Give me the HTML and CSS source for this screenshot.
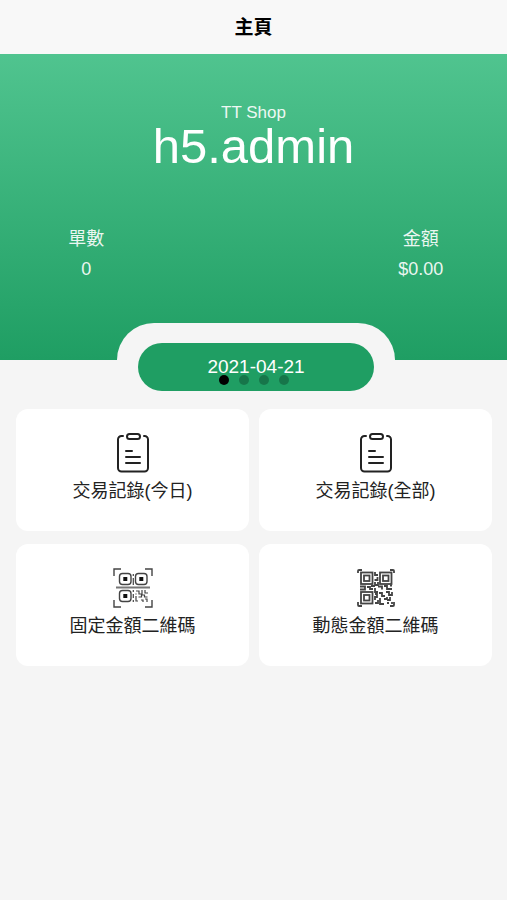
FILE: index.html
```html
<!DOCTYPE html>
<html lang="zh-Hant">
<head>
<meta charset="utf-8">
<meta name="viewport" content="width=device-width, initial-scale=1">
<title>主頁</title>
<link rel="stylesheet" href="styles.css">
</head>
<body>
<header class="topbar"><h1 class="topbar-title">主頁</h1></header>
<main>
  <section class="hero">
    <p class="shop">TT Shop</p>
    <h2 class="user">h5.admin</h2>
    <dl class="stats">
      <div class="stat"><dt>單數</dt><dd>0</dd></div>
      <div class="stat"><dt>金額</dt><dd>$0.00</dd></div>
    </dl>
    <div class="tab">
      <div class="date">2021-04-21</div>
    </div>
    <div class="dots">
      <span class="dot dot-active"></span><span class="dot"></span><span class="dot"></span><span class="dot"></span>
    </div>
  </section>
  <nav class="menu">
    <a class="card" href="#today">
      <svg class="icon" viewBox="0 0 40 40" fill="none" stroke="#222" stroke-width="2" stroke-linecap="round">
        <path d="M10 3H8.500a3.500 3.500 0 0 0-3.500 3.500V35a3.500 3.500 0 0 0 3.500 3.500h23a3.500 3.500 0 0 0 3.500-3.500V6.500a3.500 3.500 0 0 0-3.500-3.500H31"/>
        <rect x="14" y="1" width="13" height="5" rx="2.500"/>
        <path d="M13 18h6M13 24h14M13 30h14"/>
      </svg>
      <span>交易記錄(今日)</span>
    </a>
    <a class="card" href="#all">
      <svg class="icon" viewBox="0 0 40 40" fill="none" stroke="#222" stroke-width="2" stroke-linecap="round">
        <path d="M10 3H8.500a3.500 3.500 0 0 0-3.500 3.500V35a3.500 3.500 0 0 0 3.500 3.500h23a3.500 3.500 0 0 0 3.500-3.500V6.500a3.500 3.500 0 0 0-3.500-3.500H31"/>
        <rect x="14" y="1" width="13" height="5" rx="2.500"/>
        <path d="M13 18h6M13 24h14M13 30h14"/>
      </svg>
      <span>交易記錄(全部)</span>
    </a>
    <a class="card" href="#fixed">
      <svg class="icon" viewBox="0 0 40 40" fill="none" stroke="#444" stroke-width="1.400">
        <path d="M1 8V1h7M32 1h7v7M1 32v7h7M32 39h7v-7"/>
        <path d="M3 19.500h34" stroke="#777" stroke-width="1.800"/>
        <rect x="6.500" y="5.500" width="11.500" height="11" rx="3"/>
        <rect x="22.500" y="5.500" width="11.500" height="11" rx="3"/>
        <rect x="6.500" y="22.500" width="11.500" height="11" rx="3"/>
        <path d="M10.300 9h4v4h-4zM26.300 9h4v4h-4zM10.300 26h4v4h-4z" fill="#111" stroke="none"/>
        <path d="M20.300 6v2M20.300 10v7M20.300 22v2M20.300 26v4M20.300 32v2" stroke-width="1.200"/>
        <path d="M23 23h3v3h3v-4M32 22v3h3M23 28v5h2M25.500 29h3v-2h3v2h3M28 32h2v2M32 31h2v3M23 25.500v1" stroke-width="1.200"/>
      </svg>
      <span>固定金額二維碼</span>
    </a>
    <a class="card" href="#dynamic">
      <svg class="icon" viewBox="0 0 40 40" fill="none" stroke="#444" stroke-width="1.800">
        <path d="M2 5V3q0-1 1-1h3M34 2h3q1 0 1 1v2M2 34v3q0 1 1 1h3M34 38h3q1 0 1-1v-3"/>
        <rect x="5" y="4.500" width="11.500" height="11.500"/>
        <rect x="24" y="4.500" width="11.500" height="11.500"/>
        <rect x="5" y="24" width="11.500" height="11.500"/>
        <rect x="8" y="7.500" width="5.500" height="5.500"/>
        <rect x="27" y="7.500" width="5.500" height="5.500"/>
        <rect x="8" y="27" width="5.500" height="5.500"/>
        <path d="M19 4v3h3M21.500 9v3h-3M19 14v3h3v-3M4 18.500h5v3H4M11 19h3v2h3M15 18h4M19 20v4h3M22 18.500h4v3M28 18h3v3h5M34 17.500h2M19 26h2v3h-2v3M19 35h3v-3M23 25h3v3h3M24 30v6h4M30 24h3v3h3v-3M28 31h3v-2M34 29v3h-3M31 35h2M36 34v2"/>
      </svg>
      <span>動態金額二維碼</span>
    </a>
  </nav>
</main>
</body>
</html>
```
FILE: styles.css
```css
* { box-sizing: border-box; }

body {
  margin: 0;
  min-height: 100vh;
  background: #f5f5f5;
  color: #222;
  font-family: "Liberation Sans", "Noto Sans CJK TC", sans-serif;
  font-size: 18px;
  line-height: 24px;
}

h1, h2, p, dl, dd { margin: 0; }

.topbar {
  padding: 16px 0 14px;
  background: #f8f8f8;
  text-align: center;
}

.topbar-title {
  color: #000;
  font-size: 19px;
  font-weight: 700;
  line-height: 24px;
}

.hero {
  position: relative;
  padding-top: 50px;
  background: linear-gradient(#50c48f, #1f9e63);
  color: #fff;
  text-align: center;
}

.shop {
  font-size: 17px;
  line-height: 18px;
  opacity: 0.9;
}

.user {
  font-size: 49px;
  font-weight: 400;
  line-height: 48px;
}

.stats {
  display: flex;
  justify-content: space-between;
  padding: 54px 0 39px;
}

.stat {
  width: 34%;
  line-height: 30px;
  opacity: 0.9;
}

.tab {
  width: 55%;
  height: 37px;
  margin-left: 23%;
  padding: 20px 21px 0;
  border-radius: 37px 37px 0 0;
  background: #f5f5f5;
}

.date {
  height: 48px;
  border-radius: 24px;
  background: #1f9e63;
  font-size: 19px;
  line-height: 48px;
}

.dots {
  position: absolute;
  bottom: -25px;
  left: 0;
  display: flex;
  justify-content: center;
  gap: 10px;
  width: 100%;
}

.dot {
  width: 10px;
  height: 10px;
  border-radius: 50%;
  background: #000;
  opacity: 0.25;
}

.dot-active { opacity: 1; }

.menu {
  display: grid;
  grid-template-columns: 1fr 1fr;
  gap: 13px 10px;
  padding: 49px 15px 16px 16px;
}

.card {
  display: flex;
  flex-direction: column;
  align-items: center;
  gap: 6px;
  padding: 24px 0 28px;
  border-radius: 12px;
  background: #fff;
  color: #222;
  text-decoration: none;
}

.icon {
  width: 40px;
  height: 40px;
}
```
